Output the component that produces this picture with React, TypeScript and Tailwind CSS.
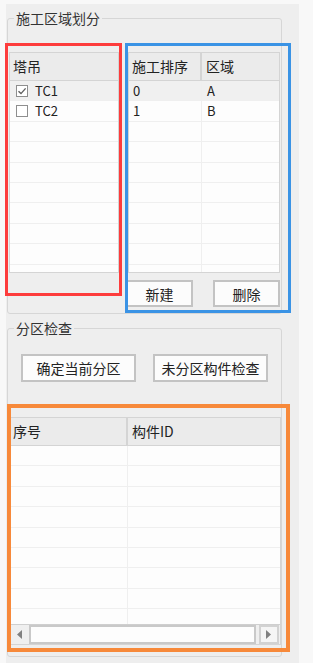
import React from 'react'

const Check = ({ on }: { on?: boolean }) => (
  <span className="w-[12px] h-[12px] border border-[#8e8e8e] bg-white flex items-center justify-center shrink-0">
    {on && (
      <svg width="10" height="10" viewBox="0 0 10 10">
        <path d="M1.5 5.2 L4 7.6 L8.6 2.4" fill="none" stroke="#5f5f5f" strokeWidth="1.4" />
      </svg>
    )}
  </span>
)

const Btn = ({ label, className }: { label: string; className: string }) => (
  <button className={`border-2 border-[#c3c3c3] bg-[#fcfcfc] text-[14px] text-[#222] flex items-center justify-center leading-none ${className}`}>
    {label}
  </button>
)

const rows = [0, 1, 2, 3, 4, 5, 6, 7, 8, 9]

const App = () => {
  return (
    <div className="relative w-[313px] h-[663px] bg-[#f8f8f8] pt-[4px] pl-[6px] overflow-hidden font-['Noto_Sans_CJK_SC','Microsoft_YaHei',sans-serif] text-[#222]">
      <div className="w-[293px] h-[659px] bg-[#eeeeee] flex flex-col">

        {/* 施工区域划分 */}
        <div className="relative mt-[14px] ml-[1px] w-[275px] h-[296px] border border-[#d6d6d6] rounded-[3px] flex">
          <span className="absolute -top-[10px] left-[6px] px-[2px] bg-[#eeeeee] text-[14px] leading-[18px] text-[#333]">施工区域划分</span>

          <div className="ml-[1px] mt-[33px] w-[110px] h-[221px] border border-[#d4d4d4] bg-[#fdfdfd] flex flex-col overflow-hidden">
            <div className="h-[28px] shrink-0 bg-[#ebebeb] border-b border-[#d4d4d4] flex items-center pl-[3px] text-[14px]">塔吊</div>
            {rows.map(i => (
              <div key={i} className={`h-[20.4px] shrink-0 border-b border-[#efefef] flex items-center gap-[7px] pl-[6px] text-[13px] ${i === 0 ? 'bg-[#f0f0f0]' : ''}`}>
                {i === 0 && <><Check on /><span>TC1</span></>}
                {i === 1 && <><Check /><span>TC2</span></>}
              </div>
            ))}
          </div>

          <div className="ml-[9px] mt-[33px] flex flex-col">
            <div className="w-[152px] h-[221px] border border-[#d4d4d4] bg-[#fdfdfd] flex flex-col overflow-hidden">
              <div className="h-[28px] shrink-0 flex text-[14px]">
                <div className="w-[73px] bg-[#ebebeb] border-b border-r-2 border-[#d4d4d4] flex items-center pl-[3px]">施工排序</div>
                <div className="flex-1 bg-[#ebebeb] border-b border-[#d4d4d4] flex items-center pl-[4px]">区域</div>
              </div>
              {rows.map(i => (
                <div key={i} className={`h-[20.4px] shrink-0 flex text-[13px] ${i === 0 ? 'bg-[#f0f0f0]' : ''}`}>
                  <div className="w-[73px] border-b border-r border-[#efefef] flex items-center pl-[4px]">{i === 0 ? '0' : i === 1 ? '1' : ''}</div>
                  <div className="flex-1 border-b border-[#efefef] flex items-center pl-[5px]">{i === 0 ? 'A' : i === 1 ? 'B' : ''}</div>
                </div>
              ))}
            </div>
            <div className="mt-[7px] flex justify-between">
              <Btn label="新建" className="-ml-[2px] w-[67px] h-[27px]" />
              <Btn label="删除" className="w-[67px] h-[27px]" />
            </div>
          </div>
        </div>

        {/* 分区检查 */}
        <div className="relative mt-[14px] ml-[1px] w-[275px] h-[329px] border border-[#d6d6d6] rounded-[3px] flex flex-col">
          <span className="absolute -top-[10px] left-[6px] px-[2px] bg-[#eeeeee] text-[14px] leading-[18px] text-[#333]">分区检查</span>

          <div className="mt-[25px] ml-[13px] flex gap-[17px]">
            <Btn label="确定当前分区" className="w-[115px] h-[28px]" />
            <Btn label="未分区构件检查" className="w-[115px] h-[28px]" />
          </div>

          <div className="mt-[35px] ml-[2px] w-[271px] h-[228px] border border-[#d4d4d4] bg-[#fdfdfd] flex flex-col overflow-hidden">
            <div className="h-[28px] shrink-0 flex text-[14px]">
              <div className="w-[117px] bg-[#ebebeb] border-b border-r-2 border-[#d4d4d4] flex items-center pl-[2px]">序号</div>
              <div className="flex-1 bg-[#ebebeb] border-b border-[#d4d4d4] flex items-center pl-[4px]">构件ID</div>
            </div>
            <div className="h-[178px] shrink-0 overflow-hidden flex flex-col">
              {rows.map(i => (
                <div key={i} className="h-[20.4px] shrink-0 flex">
                  <div className="w-[117px] border-b border-r border-[#efefef]" />
                  <div className="flex-1 border-b border-[#efefef]" />
                </div>
              ))}
            </div>
            <div className="h-[20px] shrink-0 bg-[#efefef] border-t border-[#cfcfcf] flex items-stretch">
              <div className="w-[18px] flex items-center justify-center">
                <svg width="6" height="9" viewBox="0 0 6 9"><path d="M5 0 L0 4.5 L5 9 Z" fill="#808080" /></svg>
              </div>
              <div className="w-[227px] border-2 border-[#c9c9c9] bg-[#fdfdfd]" />
              <div className="ml-[3px] w-[20px] border-2 border-[#d2d2d2] bg-[#f5f5f5] flex items-center justify-center">
                <svg width="6" height="9" viewBox="0 0 6 9"><path d="M0 0 L5 4.5 L0 9 Z" fill="#808080" /></svg>
              </div>
            </div>
          </div>
        </div>
      </div>

      {/* annotation frames */}
      <div className="absolute left-[5px] top-[43px] w-[117px] h-[253px] border-[3px] border-[#fd3c3c] pointer-events-none" />
      <div className="absolute left-[125px] top-[43px] w-[166px] h-[270px] border-[3px] border-[#3a93e5] pointer-events-none" />
      <div className="absolute left-[7px] top-[404px] w-[283px] h-[248px] border-[4px] border-[#f7893a] pointer-events-none" />
    </div>
  )
}

export default App
